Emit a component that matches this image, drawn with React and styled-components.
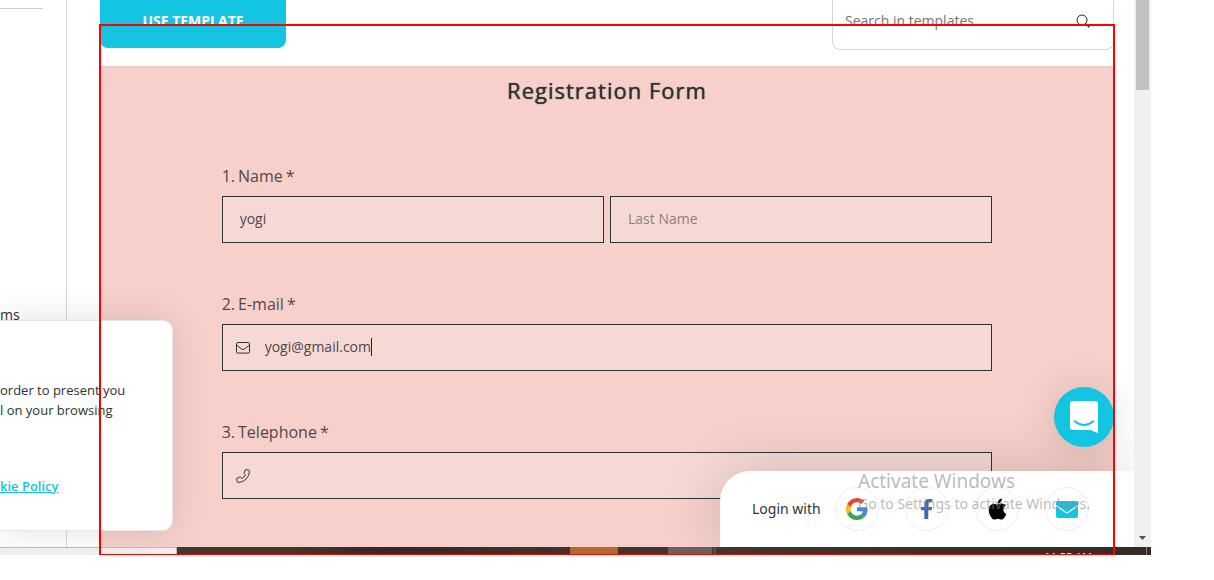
import React from "react";
import styled, { createGlobalStyle } from "styled-components";

const GlobalStyle = createGlobalStyle`
  *, *::before, *::after { box-sizing: border-box; }
  body {
    margin: 0;
    background: #fff;
    color: #2c3333;
    font-family: "Open Sans", "Noto Sans", sans-serif;
    font-size: 14px;
    line-height: 20px;
  }
  button, input { font: inherit; color: inherit; }
`;

const Page = styled.div`
  padding-right: 63px;
`;

const Screen = styled.div`
  position: relative;
  overflow: hidden;
`;

const BrowserView = styled.div`
  display: flex;
  position: relative;
`;

const Sidebar = styled.aside`
  flex: 0 0 67px;
  display: flex;
  flex-direction: column;
  border-right: 1px solid #d6d6d6;
  overflow: hidden;
`;

const SidebarRule = styled.hr`
  width: 43px;
  margin: 8px 0 0;
  border: 0;
  border-top: 1px solid #ccc;
`;

const SidebarLink = styled.a`
  margin-top: 296px;
  font-size: 14px;
  color: #2c3333;
  text-decoration: none;
`;

const Main = styled.main`
  flex: 1;
  min-width: 0;
  padding: 0 20px 0 33px;
`;

const Toolbar = styled.div`
  display: flex;
  justify-content: space-between;
  align-items: flex-start;
  padding-bottom: 16px;
`;

const TemplateButton = styled.button`
  width: 186px;
  height: 48px;
  padding: 0 0 6px;
  border: 0;
  border-radius: 0 0 8px 8px;
  background: #13c5e0;
  color: #fff;
  font-size: 14px;
  font-weight: 700;
`;

const SearchBox = styled.label`
  display: flex;
  align-items: center;
  width: 282px;
  height: 50px;
  padding: 0 23px 8px 12px;
  border: 1px solid #d6d6d6;
  border-top: 0;
  border-radius: 0 0 8px 8px;
  color: #222;
`;

const SearchInput = styled.input`
  flex: 1;
  min-width: 0;
  padding: 0;
  border: 0;
  outline: 0;
  background: none;
  font-size: 14px;
  &::placeholder { color: #757575; opacity: 1; }
`;

const Form = styled.form`
  padding: 9px 0 48px;
  background: #f7d0cb;
`;

const FormTitle = styled.h1`
  margin: 0 0 61px;
  font-size: 22px;
  line-height: 30px;
  font-weight: 400;
  letter-spacing: 1px;
  text-align: center;
  text-shadow: 0 0 1px #2c3333;
`;

const Fields = styled.div`
  display: flex;
  flex-direction: column;
  gap: 51px;
  width: 76%;
  margin: 0 auto;
`;

const Label = styled.label`
  display: flex;
  gap: 3px;
  margin-bottom: 10px;
  font-size: 16px;
  font-weight: 400;
  color: #504848;
`;

const Inputs = styled.div`
  display: flex;
  gap: 6px;
`;

const InputBox = styled.div`
  position: relative;
  flex: 1;
  display: flex;
  align-items: center;
  gap: 15px;
  height: 47px;
  padding: 0 ${(p) => (p.$icon ? "13px" : "17px")};
  border: 1px solid #2c3333;
  background: #f6d9d5;
`;

const TextInput = styled.input`
  flex: 1;
  min-width: 0;
  height: 44px;
  padding: 0 0 2px;
  border: 0;
  outline: 0;
  background: none;
  color: #504848;
  font-size: 14px;
  font-weight: 400;
  &::placeholder { color: #8f8080; opacity: 1; }
`;

const Caret = styled.span`
  position: absolute;
  left: 148px;
  top: 13px;
  width: 1px;
  height: 18px;
  background: #222;
`;

const Scrollbar = styled.div`
  flex: 0 0 17px;
  display: flex;
  flex-direction: column;
  justify-content: space-between;
  align-items: center;
  padding-bottom: 7px;
  background: #f0f0f0;
`;

const Thumb = styled.div`
  width: 13px;
  height: 90px;
  background: #c1c1c1;
`;

const CookieNotice = styled.section`
  position: absolute;
  left: 0;
  bottom: 16px;
  width: 173px;
  height: 211px;
  padding: 59px 0 0;
  border: 1px solid #e6e6e6;
  border-left: 0;
  border-radius: 0 10px 10px 0;
  background: #fff;
  box-shadow: 0 0 36px rgba(0, 0, 0, 0.12);
  font-size: 13px;
  white-space: nowrap;
`;

const CookieText = styled.p`
  margin: 0 0 56px;
`;

const CookieLink = styled.a`
  color: #13c5e0;
  font-weight: 600;
`;

const ChatButton = styled.button`
  position: absolute;
  right: 37px;
  bottom: 100px;
  display: grid;
  place-items: center;
  width: 60px;
  height: 60px;
  padding: 0;
  border: 0;
  border-radius: 50%;
  background: #13c5e0;
  box-shadow: 0 2px 40px rgba(0, 0, 0, 0.14);
`;

const LoginBar = styled.section`
  position: absolute;
  right: 17px;
  bottom: 0;
  display: flex;
  align-items: center;
  width: 414px;
  height: 76px;
  padding-left: 32px;
  border-radius: 30px 0 0 0;
  background: #fff;
  box-shadow: 0 0 60px rgba(0, 0, 0, 0.16);
  clip-path: inset(-80px 0 0 -80px);
`;

const LoginLabel = styled.span`
  width: 83px;
  font-family: "Noto Sans", "Open Sans", sans-serif;
  font-size: 14px;
`;

const LoginOptions = styled.div`
  display: flex;
  gap: 26px;
`;

const LoginButton = styled.button`
  display: grid;
  place-items: center;
  width: 44px;
  height: 44px;
  padding: 0;
  border: 1px solid #ededed;
  border-radius: 50%;
  background: #fff;
`;

const Watermark = styled.div`
  position: absolute;
  left: 858px;
  bottom: 33px;
  color: rgba(140, 140, 140, 0.6);
  font-family: "Noto Sans", "Open Sans", sans-serif;
  font-size: 14px;
  white-space: nowrap;
  pointer-events: none;
`;

const WatermarkTitle = styled.div`
  font-size: 19px;
  line-height: 26px;
`;

const Taskbar = styled.div`
  display: flex;
  height: 8px;
  overflow: hidden;
  background: linear-gradient(90deg, #44382c 0 25%, #332824 33%, #40312a 46%, #43372c 60%, #352b24 100%);
`;

const StatusArea = styled.div`
  width: 177px;
  border-top: 1px solid #bdbdbd;
  border-right: 1px solid #bdbdbd;
  background: #f1f1f1;
`;

const TaskItem = styled.div`
  width: ${(p) => p.$width}px;
  margin-left: ${(p) => p.$gap}px;
  background: ${(p) => p.$color};
`;

const Clock = styled.time`
  margin: 2px 54px 0 auto;
  color: #fff;
  font-size: 11px;
  line-height: 16px;
`;

const TrayEdge = styled.div`
  width: 5px;
  border-left: 1px solid #85807b;
`;

const Highlight = styled.div`
  position: absolute;
  top: 24px;
  right: 36px;
  bottom: 0;
  left: 99px;
  border: 2px solid #f00;
  border-bottom-width: 1px;
  pointer-events: none;
`;

const SearchIcon = () => (
  <svg width="14" height="14" viewBox="0 0 14 14" fill="none" stroke="currentColor">
    <circle cx="6" cy="6" r="5" />
    <path d="M9.7 9.7 13.3 13.3" strokeWidth="1.4" />
  </svg>
);

const MailOutline = () => (
  <svg width="14" height="12" viewBox="0 0 14 12" fill="none" stroke="#2c3333">
    <rect x=".5" y=".5" width="13" height="10.6" rx="1.3" />
    <path d="M.7 3.2 5.4 6.9Q7 8.1 8.6 6.9L13.3 3.2" />
  </svg>
);

const PhoneOutline = () => (
  <svg width="14" height="14" viewBox="0 0 14 14" fill="none" stroke="#2c3333" strokeLinejoin="round">
    <path d="M10.1.6 12.8 1.2Q13.4 1.3 13.4 1.9C13.4 8.3 8.3 13.4 1.9 13.4Q1.3 13.4 1.2 12.8L.6 10.1Q.5 9.5 1 9.3L3.9 8Q4.4 7.8 4.7 8.2L5.8 9.5Q8.3 8.2 9.5 5.8L8.2 4.7Q7.8 4.4 8 3.9L9.3 1Q9.5.5 10.1.6Z" />
  </svg>
);

const ChatIcon = () => (
  <svg width="28" height="32" viewBox="0 0 28 32">
    <path fill="#fff" d="M3 0H25Q28 0 28 3V32Q24.5 31 20.5 29H3Q0 29 0 26V3Q0 0 3 0Z" />
    <path d="M4.6 20.3Q14 27.7 23.4 20.3" fill="none" stroke="#13c5e0" strokeWidth="2" strokeLinecap="round" />
  </svg>
);

const GoogleIcon = () => (
  <svg width="22" height="22" viewBox="0 0 48 48">
    <path fill="#FBBC05" d="M10.5 28.6A14 14 0 0 1 10.5 19.4L2.6 13.2A24 24 0 0 0 2.6 34.8Z" />
    <path fill="#EA4335" d="M24 9.5c3.5 0 6.7 1.2 9.2 3.6l6.9-6.9A24 24 0 0 0 2.6 13.2l7.9 6.2A14.3 14.3 0 0 1 24 9.5Z" />
    <path fill="#34A853" d="M24 48c6.5 0 11.9-2.1 15.9-5.8l-7.7-6c-2.2 1.5-4.9 2.3-8.2 2.3a14.3 14.3 0 0 1-13.5-9.9l-7.9 6.2A24 24 0 0 0 24 48Z" />
    <path fill="#4285F4" d="M47 24.5c0-1.6-.2-3.1-.4-4.5H24v9h12.9a11 11 0 0 1-4.7 7.2l7.7 6C44.4 38 47 31.9 47 24.5Z" />
  </svg>
);

const FacebookIcon = () => (
  <svg width="12" height="20" viewBox="0 0 12 20">
    <path fill="#4267b2" d="M3.3 20V11.3H0V7.9H3.3V5C3.3 1.8 5.2 0 8 0 9.5 0 11.4.2 11.4.2V3.3H9.3C7.7 3.3 7.3 4.2 7.3 5.2V7.9H11.2L10.6 11.3H7.3V20Z" />
  </svg>
);

const AppleIcon = () => (
  <svg width="19" height="22" viewBox="0 20 384 470">
    <path d="M318.7 268.7c-.2-36.7 16.4-64.4 50-84.8-18.8-26.9-47.2-41.7-84.7-44.6-35.5-2.8-74.3 20.7-88.5 20.7-15 0-49.4-19.7-76.4-19.7C63.3 141.2 4 184.8 4 273.5q0 39.3 14.4 81.2c12.8 36.7 59 126.7 107.2 125.2 25.2-.6 43-17.9 75.8-17.9 31.8 0 48.3 17.9 76.4 17.9 48.6-.7 90.4-82.5 102.6-119.3-65.2-30.7-61.7-90-61.7-91.9zm-56.6-164.2c27.3-32.4 24.8-61.9 24-72.5-24.1 1.4-52 16.4-67.9 34.9-17.5 19.8-27.8 44.3-25.6 71.9 26.1 2 49.9-11.4 69.5-34.3z" />
  </svg>
);

const MailIcon = () => (
  <svg width="22" height="17" viewBox="0 0 22 17">
    <rect width="22" height="17" rx="2" fill="#13c5e0" />
    <path d="M0 4.5 9.7 11.2Q11 12.1 12.3 11.2L22 4.5" fill="none" stroke="#fff" strokeWidth="1.3" />
  </svg>
);

const ArrowDown = () => (
  <svg width="7" height="4" viewBox="0 0 7 4">
    <path fill="#505050" d="M0 0H7L3.5 4Z" />
  </svg>
);

const logins = [
  ["Google", GoogleIcon],
  ["Facebook", FacebookIcon],
  ["Apple", AppleIcon],
  ["E-mail", MailIcon],
];

function FieldLabel({ number, text, htmlFor }) {
  return (
    <Label htmlFor={htmlFor}>
      <span>{number}.</span>
      <span>{text}</span>
      <span>*</span>
    </Label>
  );
}

export default function App() {
  return (
    <Page>
      <GlobalStyle />
      <Screen>
        <BrowserView>
          <Sidebar>
            <SidebarRule />
            <SidebarLink href="#forms">ms</SidebarLink>
          </Sidebar>
          <Main>
            <Toolbar>
              <TemplateButton type="button">USE TEMPLATE</TemplateButton>
              <SearchBox>
                <SearchInput type="text" aria-label="Search in templates" placeholder="Search in templates" />
                <SearchIcon />
              </SearchBox>
            </Toolbar>
            <Form>
              <FormTitle>Registration Form</FormTitle>
              <Fields>
                <div>
                  <FieldLabel number={1} text="Name" htmlFor="first" />
                  <Inputs>
                    <InputBox>
                      <TextInput id="first" defaultValue="yogi" />
                    </InputBox>
                    <InputBox>
                      <TextInput aria-label="Last Name" placeholder="Last Name" />
                    </InputBox>
                  </Inputs>
                </div>
                <div>
                  <FieldLabel number={2} text="E-mail" htmlFor="email" />
                  <InputBox $icon>
                    <MailOutline />
                    <TextInput id="email" type="email" defaultValue="yogi@gmail.com" />
                    <Caret />
                  </InputBox>
                </div>
                <div>
                  <FieldLabel number={3} text="Telephone" htmlFor="phone" />
                  <InputBox $icon>
                    <PhoneOutline />
                    <TextInput id="phone" type="tel" />
                  </InputBox>
                </div>
              </Fields>
            </Form>
          </Main>
          <LoginBar>
            <LoginLabel>Login with</LoginLabel>
            <LoginOptions>
              {logins.map(([name, Icon]) => (
                <LoginButton key={name} type="button" aria-label={name}>
                  <Icon />
                </LoginButton>
              ))}
            </LoginOptions>
          </LoginBar>
          <Scrollbar>
            <Thumb />
            <ArrowDown />
          </Scrollbar>
          <CookieNotice>
            <CookieText>
              order to present you
              <br />l on your browsing
            </CookieText>
            <CookieLink href="#cookies">kie Policy</CookieLink>
          </CookieNotice>
          <ChatButton type="button" aria-label="Open chat">
            <ChatIcon />
          </ChatButton>
          <Watermark>
            <WatermarkTitle>Activate Windows</WatermarkTitle>
            Go to Settings to activate Windows.
          </Watermark>
        </BrowserView>
        <Taskbar>
          <StatusArea />
          <TaskItem $gap={393} $width={48} $color="#b56a2b" />
          <TaskItem $gap={50} $width={44} $color="#696058" />
          <TaskItem $gap={1} $width={3} $color="#554a42" />
          <Clock>11:55 AM</Clock>
          <TrayEdge />
        </Taskbar>
        <Highlight />
      </Screen>
    </Page>
  );
}
